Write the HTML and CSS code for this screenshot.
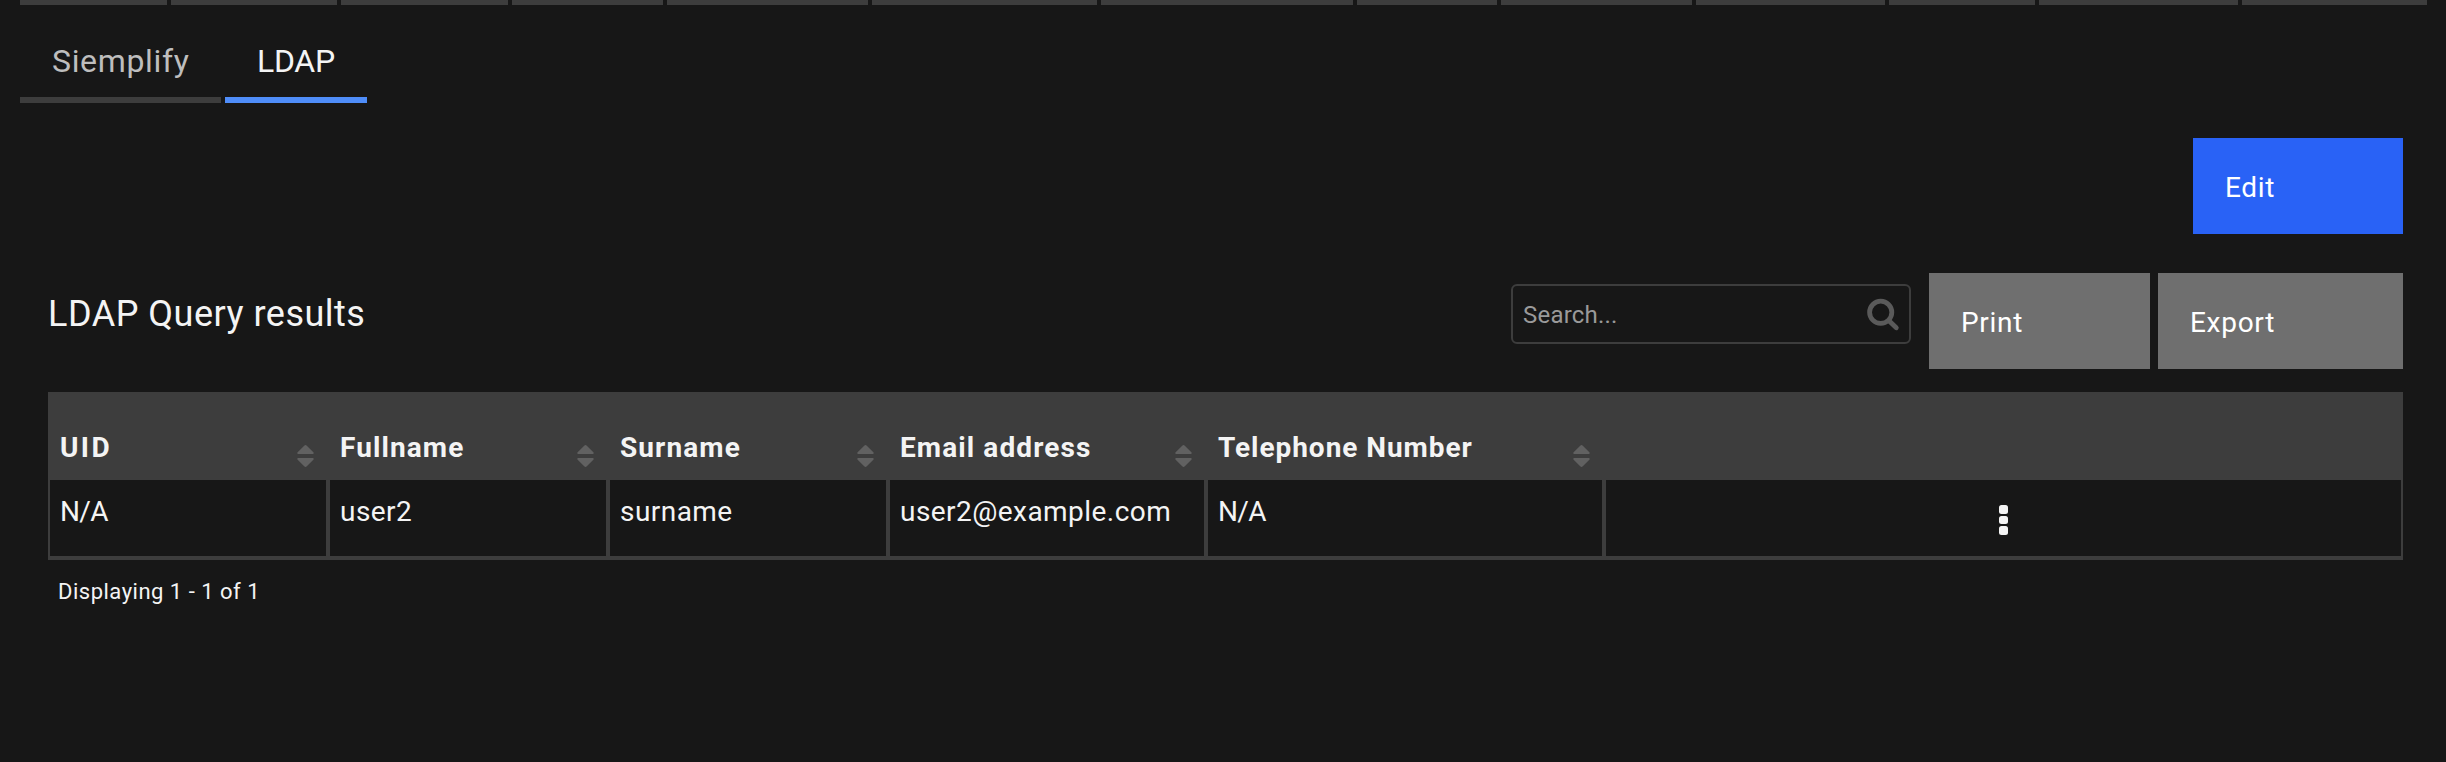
FILE: index.html
```html
<!DOCTYPE html>
<html lang="en">
<head>
<meta charset="utf-8">
<title>LDAP Query results</title>
<link rel="stylesheet" href="styles.css">
</head>
<body>
<svg width="0" height="0" class="defs">
  <symbol id="sort" viewBox="0 0 17 22">
    <path d="M7.2 .7Q8.5-.5 9.800 .7L16.600 7.600Q17 9 15.800 9H1.200Q0 9 .4 7.600ZM7.200 21.300Q8.500 22.500 9.800 21.300L16.600 14.400Q17 13 15.800 13H1.200Q0 13 .4 14.400Z"/>
  </symbol>
</svg>
<div class="strip">
  <i class="s1"></i><i class="s2"></i><i class="s3"></i><i class="s4"></i><i class="s5"></i><i class="s6"></i><i class="s7"></i><i class="s8"></i><i class="s9"></i><i class="s10"></i><i class="s11"></i><i class="s12"></i><i class="s13"></i>
</div>
<nav class="tabs">
  <a class="tab tab-first">Siemplify</a>
  <a class="tab active">LDAP</a>
</nav>
<main class="content">
  <div class="actions"><button class="btn primary">Edit</button></div>
  <div class="toolbar">
    <h1 class="title">LDAP Query results</h1>
    <div class="search">
      <span>Search...</span>
      <svg class="search-icon" width="34" height="34" viewBox="0 0 34 34"><circle cx="14.700" cy="14.300" r="11.100"/><path d="M23 22.700L30.300 29.800"/></svg>
    </div>
    <button class="btn print">Print</button>
    <button class="btn export">Export</button>
  </div>
  <div class="table">
    <div class="row head">
      <div class="th"><span class="uid">UID</span><svg class="sort"><use href="#sort"/></svg></div>
      <div class="th">Fullname<svg class="sort"><use href="#sort"/></svg></div>
      <div class="th">Surname<svg class="sort"><use href="#sort"/></svg></div>
      <div class="th">Email address<svg class="sort"><use href="#sort"/></svg></div>
      <div class="th phone">Telephone Number<svg class="sort"><use href="#sort"/></svg></div>
      <div class="th"></div>
    </div>
    <div class="row">
      <div class="td na">N/A</div>
      <div class="td">user2</div>
      <div class="td">surname</div>
      <div class="td">user2@example.com</div>
      <div class="td na">N/A</div>
      <div class="td menu"><i></i><i></i><i></i></div>
    </div>
  </div>
  <p class="summary">Displaying 1 - 1 of 1</p>
</main>
</body>
</html>
```
FILE: styles.css
```css
* { box-sizing: border-box; }
body {
  margin: 0;
  height: 762px;
  overflow: hidden;
  background: #171717;
  color: #f4f4f4;
  font-family: Roboto, "Liberation Sans", sans-serif;
  font-size: 28px;
}
.defs { position: absolute; }

.strip { display: flex; gap: 4px; height: 5px; padding-left: 20px; }
.strip i { background: #3d3d3d; }
.s1 { width: 147px; }
.s2 { width: 166px; }
.s3 { width: 167px; }
.s4 { width: 151px; }
.s5 { width: 201px; }
.s6 { width: 225px; }
.s7 { width: 252px; }
.s8 { width: 140px; }
.s9 { width: 191px; }
.s10 { width: 189px; }
.s11 { width: 146px; }
.s12 { width: 199px; }
.s13 { width: 185px; }

.tabs { display: flex; gap: 4px; padding-left: 20px; height: 98px; }
.tab {
  width: 142px;
  padding: 36px 0 0 32px;
  border-bottom: 6px solid #3d3d3d;
  color: #bebebe;
  font-size: 32px;
  line-height: 40px;
  letter-spacing: .65px;
}
.tab-first { width: 201px; }
.tab.active { color: #f4f4f4; border-color: #4f8df9; letter-spacing: -.3px; }

.content { padding: 35px 43px 0 48px; }
.actions { display: flex; justify-content: flex-end; height: 96px; }
.btn {
  height: 96px;
  padding: 2px 0 0 32px;
  border: 0;
  background: #6f6f6f;
  color: #fff;
  font: 28px/96px Roboto, "Liberation Sans", sans-serif;
  text-align: left;
  letter-spacing: .7px;
}
.primary { width: 210px; background: #2962f6; }
.print { width: 221px; margin-left: 18px; }
.export { width: 245px; margin-left: 8px; }

.toolbar { display: flex; align-items: flex-start; margin-top: 39px; height: 96px; }
.title { flex: 1; margin: 0; font-size: 36px; font-weight: 400; line-height: 82px; letter-spacing: .5px; }
.search {
  display: flex;
  justify-content: space-between;
  width: 400px;
  height: 60px;
  margin-top: 11px;
  padding: 0 9px 0 10px;
  border: 2px solid #3d3d3d;
  border-radius: 6px;
  color: #9a9a9a;
  font-size: 24px;
  line-height: 58px;
  letter-spacing: .2px;
}
.search-icon { margin-top: 12px; fill: none; stroke: #5a5a5a; stroke-width: 4.800; stroke-linecap: round; }

.table { margin-top: 23px; padding: 0 2px 4px; background: #3d3d3d; }
.row { display: grid; grid-template-columns: 276px 276px 276px 314px 394px 795px; gap: 4px; height: 76px; }
.head { height: 88px; }
.th {
  display: flex;
  justify-content: space-between;
  align-items: flex-start;
  padding: 36px 12px 0 10px;
  font-weight: 700;
  line-height: 40px;
  letter-spacing: 1.1px;
  white-space: nowrap;
}
.phone { letter-spacing: .95px; }
.uid { letter-spacing: 2.4px; }
.sort { width: 17px; height: 22px; margin-top: 17px; fill: #616161; }
.td { padding: 12px 0 0 10px; background: #171717; line-height: 40px; letter-spacing: .45px; }
.na { letter-spacing: -.7px; }
.menu { display: flex; flex-direction: column; align-items: center; gap: 2px; padding: 25px 0 0; }
.menu i { width: 8.500px; height: 8.500px; border-radius: 2.500px; background: #f4f4f4; }

.summary { margin: 0; padding-left: 10px; font-size: 22px; line-height: 63px; letter-spacing: .5px; }
```
